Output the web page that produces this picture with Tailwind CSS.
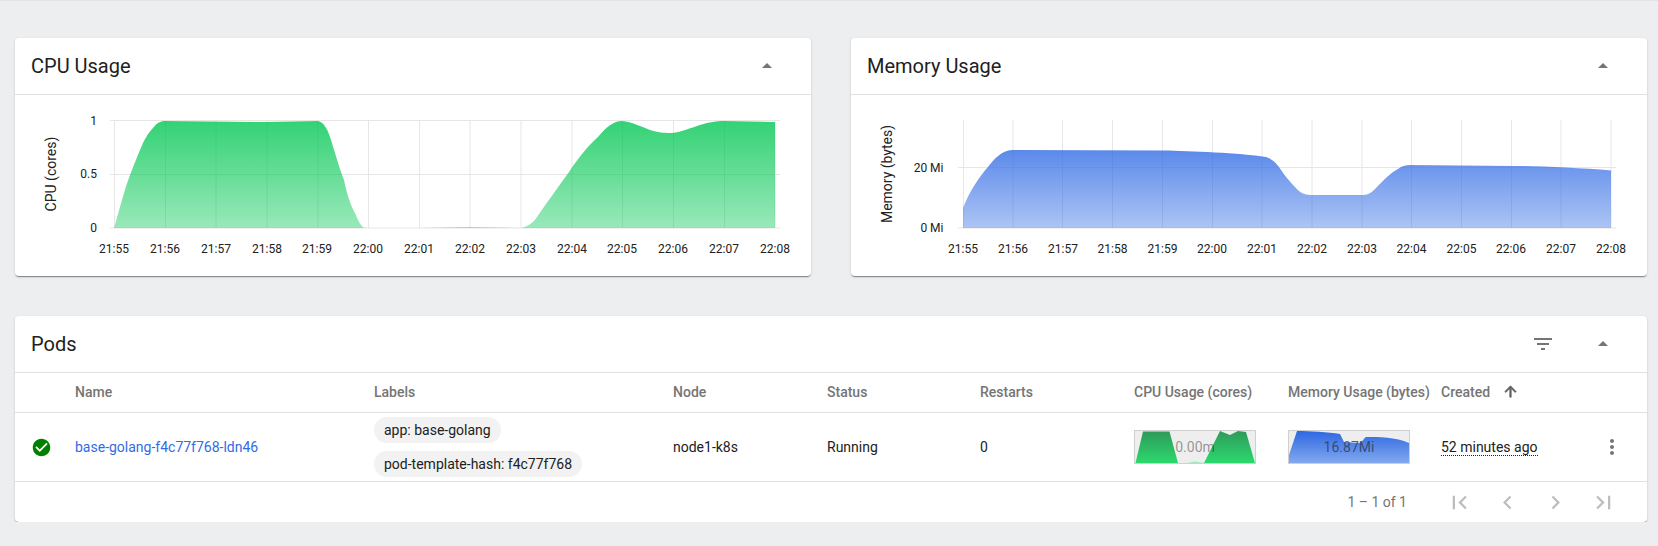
<!DOCTYPE html>
<html>
<head>
<meta charset="utf-8">
<script src="https://cdn.jsdelivr.net/npm/@tailwindcss/browser@4"></script>
</head>
<body class="bg-[#edeef0] font-['Roboto',sans-serif] text-sm text-[#212121] overflow-hidden">
<div class="h-[1px] bg-[#e2e3e5]"></div>
<main class="pt-[37px] pl-[15px] pr-[11px] flex flex-col gap-10">

  <!-- charts -->
  <div class="grid grid-cols-2 gap-10">
    <section class="bg-white rounded-[4px] h-[238px] shadow-[0_2px_1px_-1px_rgba(0,0,0,0.3),0_1px_1px_rgba(0,0,0,0.14),0_1px_3px_rgba(0,0,0,0.12)]">
      <div class="h-[57px] pl-4 pr-8 flex items-center justify-between border-b border-[#e0e0e0]">
        <h2 class="text-xl leading-none">CPU Usage</h2>
        <svg class="w-6 h-6 fill-[#757575]" viewBox="0 0 24 24"><path d="M7 14l5-5 5 5z"/></svg>
      </div>
      <svg class="block font-['Roboto',sans-serif]" width="796" height="181" viewBox="15 95 796 181">
        <defs>
          <linearGradient id="g" x1="0" y1="0" x2="0" y2="1"><stop offset="0" stop-color="#00c752" stop-opacity=".8"/><stop offset="1" stop-color="#00c752" stop-opacity=".4"/></linearGradient>
        </defs>
        <g class="stroke-[#e6e6e6]" stroke-width="1">
          <path d="M110 120.5H780M110 174.5H780M110 228H780"/>
          <path d="M114.5 120V228M165.5 120V228M216 120V228M267 120V228M318 120V228M368.5 120V228M419.5 120V228M470 120V228M521 120V228M572 120V228M622.5 120V228M673.5 120V228M724.5 120V228M775 120V228"/>
        </g>
        <path fill="url(#g)" d="M114 228C117 218 119 210 122 200C128 178 134 165 140 150C144 140 148 133 153 128C157 123 160 121 165 121L265 122L318 121C324 122 328 130 331 140C336 156 340 170 344 180C347 195 351 206 355 213C358 220 361 228 366 228H419L470 227L521 228C528 226 532 224 537 217C546 204 556 190 569 172C578 158 588 146 598 137C606 127 614 121 622 121C632 122 640 126 650 130C660 133 666 133 672 133C682 132 690 128 700 125C710 122 716 121 724 121L775 122V228Z"/>
        <g class="fill-[#212121]" font-size="12">
          <text x="97" y="125" text-anchor="end">1</text>
          <text x="97" y="178" text-anchor="end">0.5</text>
          <text x="97" y="232" text-anchor="end">0</text>
          <g text-anchor="middle">
            <text x="114" y="253">21:55</text><text x="165" y="253">21:56</text><text x="216" y="253">21:57</text><text x="267" y="253">21:58</text><text x="317" y="253">21:59</text><text x="368" y="253">22:00</text><text x="419" y="253">22:01</text><text x="470" y="253">22:02</text><text x="521" y="253">22:03</text><text x="572" y="253">22:04</text><text x="622" y="253">22:05</text><text x="673" y="253">22:06</text><text x="724" y="253">22:07</text><text x="775" y="253">22:08</text>
          </g>
          <text transform="translate(56 174) rotate(-90)" text-anchor="middle" font-size="14">CPU (cores)</text>
        </g>
      </svg>
    </section>

    <section class="bg-white rounded-[4px] h-[238px] shadow-[0_2px_1px_-1px_rgba(0,0,0,0.3),0_1px_1px_rgba(0,0,0,0.14),0_1px_3px_rgba(0,0,0,0.12)]">
      <div class="h-[57px] pl-4 pr-8 flex items-center justify-between border-b border-[#e0e0e0]">
        <h2 class="text-xl leading-none">Memory Usage</h2>
        <svg class="w-6 h-6 fill-[#757575]" viewBox="0 0 24 24"><path d="M7 14l5-5 5 5z"/></svg>
      </div>
      <svg class="block font-['Roboto',sans-serif]" width="796" height="181" viewBox="851 95 796 181">
        <defs>
          <linearGradient id="b" x1="0" y1="0" x2="0" y2="1"><stop offset="0" stop-color="#326ce5" stop-opacity=".8"/><stop offset="1" stop-color="#326ce5" stop-opacity=".4"/></linearGradient>
        </defs>
        <g class="stroke-[#e6e6e6]" stroke-width="1">
          <path d="M958 167.5H1616M958 228H1616"/>
          <path d="M963.5 120V228M1013 120V228M1062.5 120V228M1112.5 120V228M1162.5 120V228M1212.5 120V228M1262 120V228M1312 120V228M1362 120V228M1411.5 120V228M1461.5 120V228M1511.5 120V228M1561 120V228M1611 120V228"/>
        </g>
        <path fill="url(#b)" d="M963 208C970 190 980 176 988 167C993 160 1002 150 1012 150L1163 150.5C1190 151 1240 153 1266 157C1272 159 1276 163 1279 167C1285 176 1290 182 1295 187C1299 192 1304 195 1311 195H1363C1369 195 1372 192 1376 188C1384 180 1390 173 1398 169C1402 166 1405 165 1410 165L1516 166C1540 166 1580 168 1611 170.5V228H963Z"/>
        <g class="fill-[#212121]" font-size="12">
          <text x="943.5" y="172" text-anchor="end">20 Mi</text>
          <text x="943.5" y="232" text-anchor="end">0 Mi</text>
          <g text-anchor="middle">
            <text x="963" y="253">21:55</text><text x="1013" y="253">21:56</text><text x="1063" y="253">21:57</text><text x="1112.5" y="253">21:58</text><text x="1162.5" y="253">21:59</text><text x="1212" y="253">22:00</text><text x="1262" y="253">22:01</text><text x="1312" y="253">22:02</text><text x="1362" y="253">22:03</text><text x="1411.5" y="253">22:04</text><text x="1461.5" y="253">22:05</text><text x="1511" y="253">22:06</text><text x="1561" y="253">22:07</text><text x="1611" y="253">22:08</text>
          </g>
          <text transform="translate(892 174) rotate(-90)" text-anchor="middle" font-size="14">Memory (bytes)</text>
        </g>
      </svg>
    </section>
  </div>

  <!-- pods -->
  <section class="bg-white rounded-[4px] shadow-[0_2px_1px_-1px_rgba(0,0,0,0.3),0_1px_1px_rgba(0,0,0,0.14),0_1px_3px_rgba(0,0,0,0.12)]">
    <div class="h-[57px] pl-4 pr-8 flex items-center justify-between border-b border-[#e0e0e0]">
      <h2 class="text-xl leading-none">Pods</h2>
      <div class="flex items-center gap-9">
        <svg class="w-6 h-6 fill-[#757575]" viewBox="0 0 24 24"><path d="M10 18h4v-2h-4v2zM3 6v2h18V6H3zm3 7h12v-2H6v2z"/></svg>
        <svg class="w-6 h-6 fill-[#757575]" viewBox="0 0 24 24"><path d="M7 14l5-5 5 5z"/></svg>
      </div>
    </div>

    <div class="grid grid-cols-[60px_299px_299px_154px_153px_154px_154px_153px_158px_1fr] items-center h-[40px] pb-[2px] border-b border-[#e0e0e0] font-medium text-[#757575] whitespace-nowrap">
      <div></div>
      <div>Name</div>
      <div>Labels</div>
      <div>Node</div>
      <div>Status</div>
      <div>Restarts</div>
      <div>CPU Usage (cores)</div>
      <div>Memory Usage (bytes)</div>
      <div class="flex items-center gap-3">Created
        <svg class="w-[17px] h-[17px] fill-[#616161] stroke-[#616161] stroke-1" viewBox="0 0 24 24"><path d="M4 12l1.41 1.41L11 7.83V20h2V7.83l5.58 5.59L20 12l-8-8-8 8z"/></svg>
      </div>
      <div></div>
    </div>

    <div class="grid grid-cols-[60px_299px_299px_154px_153px_154px_154px_153px_158px_1fr] items-center h-[69px] border-b border-[#e0e0e0] whitespace-nowrap">
      <div class="pl-[16px]">
        <svg class="block w-[21px] h-[21px] fill-[#008000]" viewBox="0 0 24 24"><circle cx="12" cy="12" r="7" fill="#fff"/><path d="M12 2C6.48 2 2 6.48 2 12s4.48 10 10 10 10-4.48 10-10S17.52 2 12 2zm-2 15l-5-5 1.41-1.41L10 14.17l7.59-7.59L19 8l-9 9z"/></svg>
      </div>
      <a href="#" class="text-[#326ce5]">base-golang-f4c77f768-ldn46</a>
      <div class="flex flex-col items-start gap-2">
        <span class="h-[26px] leading-[26px] px-[10px] rounded-full bg-[#f2f2f2]">app: base-golang</span>
        <span class="h-[26px] leading-[26px] px-[10px] rounded-full bg-[#f2f2f2]">pod-template-hash: f4c77f768</span>
      </div>
      <div>node1-k8s</div>
      <div>Running</div>
      <div>0</div>
      <div class="relative w-[122px] h-[34px] border border-[#d0d0d0] bg-[#eeeeee]">
        <svg class="block" width="120" height="32" viewBox="1 1 120 32">
          <defs>
            <linearGradient id="sc" x1="0" y1="0" x2="0" y2="1"><stop offset="0" stop-color="#2f9a5a"/><stop offset="1" stop-color="#2cd96e"/></linearGradient>
          </defs>
          <path fill="url(#sc)" d="M1.5 33L9 1.5H35.5L44 33Z"/>
          <path fill="#a6e6c0" d="M53 33L61 31.5L70 33Z"/>
          <path fill="url(#sc)" d="M70 33L86 1L96 5L104 1L112 2L121 33Z"/>
        </svg>
        <span class="absolute inset-0 flex items-center justify-center text-black/40">0.00m</span>
      </div>
      <div class="relative w-[122px] h-[34px] border border-[#d0d0d0] bg-[#eeeeee]">
        <svg class="block" width="120" height="32" viewBox="1 1 120 32">
          <defs><linearGradient id="sm" x1="0" y1="0" x2="0" y2="1"><stop offset="0" stop-color="#2d68e2"/><stop offset="1" stop-color="#83a8ee"/></linearGradient></defs>
          <path fill="url(#sm)" d="M1 33V25L9 1C22 1 40 2 52 4L56 12L72 13C75 11 76 8 78 7C90 7 108 7 121 13V33Z"/>
        </svg>
        <span class="absolute inset-0 flex items-center justify-center text-[#303a55]/80">16.87Mi</span>
      </div>
      <div><span class="border-b border-dotted border-[#212121] leading-none">52 minutes ago</span></div>
      <div class="pl-[1px]">
        <svg class="block w-6 h-6 fill-[#757575]" viewBox="0 0 24 24"><path d="M12 8c1.1 0 2-.9 2-2s-.9-2-2-2-2 .9-2 2 .9 2 2 2zm0 2c-1.1 0-2 .9-2 2s.9 2 2 2 2-.9 2-2-.9-2-2-2zm0 6c-1.1 0-2 .9-2 2s.9 2 2 2 2-.9 2-2-.9-2-2-2z"/></svg>
      </div>
    </div>

    <div class="h-[40px] pr-5 flex items-center justify-end text-[#757575]">
      <span class="mr-[28px]">1 – 1 of 1</span>
      <div class="flex items-center">
        <span class="w-12 flex justify-center"><svg class="w-[27px] h-[27px] fill-[#bdbdbd]" viewBox="0 0 24 24"><path d="M18.41 16.59L13.82 12l4.59-4.59L17 6l-6 6 6 6zM6 6h2v12H6z"/></svg></span>
        <span class="w-12 flex justify-center"><svg class="w-[27px] h-[27px] fill-[#bdbdbd]" viewBox="0 0 24 24"><path d="M15.41 7.41L14 6l-6 6 6 6 1.41-1.41L10.83 12z"/></svg></span>
        <span class="w-12 flex justify-center"><svg class="w-[27px] h-[27px] fill-[#bdbdbd]" viewBox="0 0 24 24"><path d="M10 6L8.59 7.41 13.17 12l-4.58 4.59L10 18l6-6z"/></svg></span>
        <span class="w-12 flex justify-center"><svg class="w-[27px] h-[27px] fill-[#bdbdbd]" viewBox="0 0 24 24"><path d="M5.59 7.41L10.18 12l-4.59 4.59L7 18l6-6-6-6zM16 6h2v12h-2z"/></svg></span>
      </div>
    </div>
  </section>
</main>
</body>
</html>
